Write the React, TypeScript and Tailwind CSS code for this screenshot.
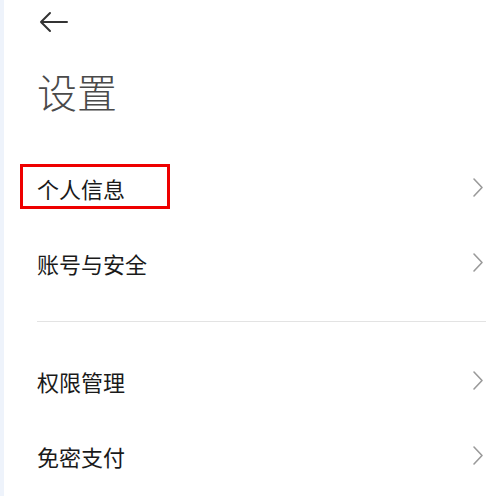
import { ReactNode } from "react";

type RowProps = {
  label: string;
  highlighted?: boolean;
};

const Chevron = () => (
  <svg width="12" height="21" viewBox="0 0 12 21" fill="none" className="shrink-0">
    <polyline
      points="2,2 10,10.5 2,19"
      stroke="#9a9a9a"
      strokeWidth="1.6"
      strokeLinecap="round"
      strokeLinejoin="round"
    />
  </svg>
);

const SettingRow = ({ label, highlighted }: RowProps) => (
  <div className="relative flex h-[75px] items-center justify-between pr-[2px] cursor-pointer">
    <span className="text-[22px] leading-none text-[#1a1a1a]">{label}</span>
    <Chevron />
    {/* red annotation box */}
    {highlighted && (
      <div className="absolute left-[-17px] top-[14px] h-[45px] w-[150px] border-[3px] border-[#ee0000]" />
    )}
  </div>
);

const Section = ({ children }: { children: ReactNode }) => <div className="flex flex-col">{children}</div>;

export default function App() {
  return (
    <div className="flex min-h-[496px] w-full bg-white font-['Noto_Sans_CJK_SC','Noto_Sans',sans-serif]">
      <div className="w-[4px] shrink-0 bg-[#eef3fb]" />
      <main className="flex-1 pl-[33px] pr-[5px]">
        {/* Header */}
        <div className="flex h-[44px] items-center">
          <svg width="30" height="22" viewBox="0 0 30 22" fill="none" className="ml-[2px]">
            <path
              d="M2 11 H28 M2 11 L11 2 M2 11 L11 20"
              stroke="#333"
              strokeWidth="2"
              strokeLinecap="round"
              strokeLinejoin="round"
            />
          </svg>
        </div>
        <h1 className="mt-[27px] text-[40px] font-light leading-none text-[#4a4a4a]">设置</h1>

        <div className="mt-[39px]">
          <Section>
            <SettingRow label="个人信息" highlighted />
            <SettingRow label="账号与安全" />
          </Section>
          <div className="mt-[21px] mb-[21px] h-px bg-[#e3e3e3]" />
          <Section>
            <SettingRow label="权限管理" />
            <SettingRow label="免密支付" />
          </Section>
        </div>
      </main>
    </div>
  );
}
